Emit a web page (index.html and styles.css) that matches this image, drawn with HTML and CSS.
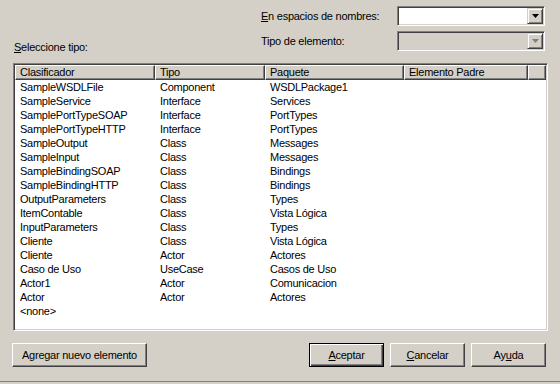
FILE: index.html
```html
<!DOCTYPE html>
<html lang="es">
<head>
<meta charset="utf-8">
<title>Seleccionar elemento</title>
<link rel="stylesheet" href="styles.css">
</head>
<body>
<div class="dialog">
  <div class="top">
    <span class="lbl lbl-ns"><u>E</u>n espacios de nombres:</span>
    <div class="combo combo-ns">
      <div class="combo-field"></div>
      <div class="combo-btn"><svg width="7" height="4" viewBox="0 0 7 4"><path d="M0 0h7L3.5 4z" fill="#000"/></svg></div>
    </div>
    <span class="lbl lbl-sel"><u>S</u>eleccione tipo:</span>
    <span class="lbl lbl-tipo">Tipo de elemento:</span>
    <div class="combo combo-tipo disabled">
      <div class="combo-field"></div>
      <div class="combo-btn"><svg width="7" height="4" viewBox="0 0 7 4"><path d="M0 0h7L3.5 4z" fill="#808080"/></svg></div>
    </div>
  </div>

  <div class="list">
    <div class="list-head">
      <div class="hcell c1">Clasificador</div>
      <div class="hcell c2">Tipo</div>
      <div class="hcell c3">Paquete</div>
      <div class="hcell c4">Elemento Padre</div>
      <div class="hcell c5"></div>
    </div>
    <div class="list-body">
      <div class="row"><span class="c1">SampleWSDLFile</span><span class="c2">Component</span><span class="c3">WSDLPackage1</span></div>
      <div class="row"><span class="c1">SampleService</span><span class="c2">Interface</span><span class="c3">Services</span></div>
      <div class="row"><span class="c1">SamplePortTypeSOAP</span><span class="c2">Interface</span><span class="c3">PortTypes</span></div>
      <div class="row"><span class="c1">SamplePortTypeHTTP</span><span class="c2">Interface</span><span class="c3">PortTypes</span></div>
      <div class="row"><span class="c1">SampleOutput</span><span class="c2">Class</span><span class="c3">Messages</span></div>
      <div class="row"><span class="c1">SampleInput</span><span class="c2">Class</span><span class="c3">Messages</span></div>
      <div class="row"><span class="c1">SampleBindingSOAP</span><span class="c2">Class</span><span class="c3">Bindings</span></div>
      <div class="row"><span class="c1">SampleBindingHTTP</span><span class="c2">Class</span><span class="c3">Bindings</span></div>
      <div class="row"><span class="c1">OutputParameters</span><span class="c2">Class</span><span class="c3">Types</span></div>
      <div class="row"><span class="c1">ItemContable</span><span class="c2">Class</span><span class="c3">Vista Lógica</span></div>
      <div class="row"><span class="c1">InputParameters</span><span class="c2">Class</span><span class="c3">Types</span></div>
      <div class="row"><span class="c1">Cliente</span><span class="c2">Class</span><span class="c3">Vista Lógica</span></div>
      <div class="row"><span class="c1">Cliente</span><span class="c2">Actor</span><span class="c3">Actores</span></div>
      <div class="row"><span class="c1">Caso de Uso</span><span class="c2">UseCase</span><span class="c3">Casos de Uso</span></div>
      <div class="row"><span class="c1">Actor1</span><span class="c2">Actor</span><span class="c3">Comunicacion</span></div>
      <div class="row"><span class="c1">Actor</span><span class="c2">Actor</span><span class="c3">Actores</span></div>
      <div class="row"><span class="c1">&lt;none&gt;</span></div>
    </div>
  </div>

  <div class="buttons">
    <button class="btn btn-add">Agregar nuevo elemento</button>
    <div class="spacer"></div>
    <button class="btn btn-default"><u>A</u>ceptar</button>
    <button class="btn"><u>C</u>ancelar</button>
    <button class="btn">Ay<u>u</u>da</button>
  </div>
</div>
</body>
</html>
```
FILE: styles.css
```css
html, body {
  margin: 0;
  padding: 0;
  background: #d4d0c8;
}
body {
  width: 560px;
  height: 384px;
  overflow: hidden;
  font-family: "Liberation Sans", Arial, sans-serif;
  font-size: 11px;
  letter-spacing: -0.25px;
  color: #000;
}
u { text-decoration: underline; text-underline-offset: 1px; }

.dialog {
  height: 381px;
  border-bottom: 1px solid #808080;
  display: flex;
  flex-direction: column;
}

.top {
  display: grid;
  grid-template-columns: 14px 247px 136px 148px;
  grid-template-rows: 20px 20px;
  row-gap: 5px;
  padding-top: 6px;
}
.lbl { align-self: center; white-space: nowrap; }
.lbl-ns { grid-column: 3; grid-row: 1; }
.combo-ns { grid-column: 4; grid-row: 1; }
.lbl-sel { grid-column: 2; grid-row: 2; align-self: end; margin-bottom: -2px; }
.lbl-tipo { grid-column: 3; grid-row: 2; }
.combo-tipo { grid-column: 4; grid-row: 2; }

.combo {
  box-sizing: border-box;
  height: 20px;
  border: 1px solid;
  border-color: #808080 #fff #fff #808080;
  box-shadow: inset 1px 1px #404040, inset -1px -1px #d4d0c8;
  background: #fff;
  display: flex;
  padding: 2px;
}
.combo.disabled { background: #d4d0c8; }
.combo-field { flex: 1; }
.combo-btn {
  box-sizing: border-box;
  width: 16px;
  height: 16px;
  margin: -1px -1px 0 0;
  background: #d4d0c8;
  border: 1px solid;
  border-color: #d4d0c8 #404040 #404040 #d4d0c8;
  box-shadow: inset 1px 1px #fff, inset -1px -1px #808080;
  display: flex;
  align-items: center;
  justify-content: center;
}

.list {
  box-sizing: border-box;
  margin: 12px 0 0 13px;
  width: 535px;
  height: 268px;
  border: 1px solid;
  border-color: #808080 #fff #fff #808080;
  box-shadow: inset 1px 1px #404040, inset -1px -1px #d4d0c8;
  background: #fff;
  padding: 1px;
  overflow: hidden;
}
.list-head {
  display: flex;
  height: 15px;
}
.hcell {
  box-sizing: border-box;
  height: 15px;
  background: #d4d0c8;
  border-top: 1px solid #fff;
  border-left: 1px solid #fff;
  border-right: 1px solid #404040;
  border-bottom: 1px solid #404040;
  box-shadow: inset -1px -1px #808080;
  padding-left: 4px;
  line-height: 12px;
  white-space: nowrap;
}
.hcell.c5 { flex: 1; }
.c1 { width: 140px; }
.c2 { width: 110px; }
.c3 { width: 139px; }
.c4 { width: 124px; }

.list-body { padding-top: 0; }
.row {
  display: flex;
  height: 14px;
  line-height: 14px;
}
.row span {
  box-sizing: border-box;
  padding-left: 5px;
  white-space: nowrap;
}

.buttons {
  display: flex;
  gap: 6px;
  margin-top: 12px;
  padding: 0 14px 0 12px;
}
.spacer { flex: 1; }
.btn {
  box-sizing: border-box;
  width: 75px;
  height: 24px;
  font: inherit;
  letter-spacing: inherit;
  color: #000;
  background: #d4d0c8;
  border: 1px solid;
  border-color: #fff #404040 #404040 #fff;
  box-shadow: inset -1px -1px #808080;
  padding: 0;
  margin: 0;
}
.btn-add { width: 135px; }
.btn-default {
  border: 1px solid #000;
  box-shadow: inset 1px 1px #fff, inset -1px -1px #404040, inset -2px -2px #808080;
}
```
